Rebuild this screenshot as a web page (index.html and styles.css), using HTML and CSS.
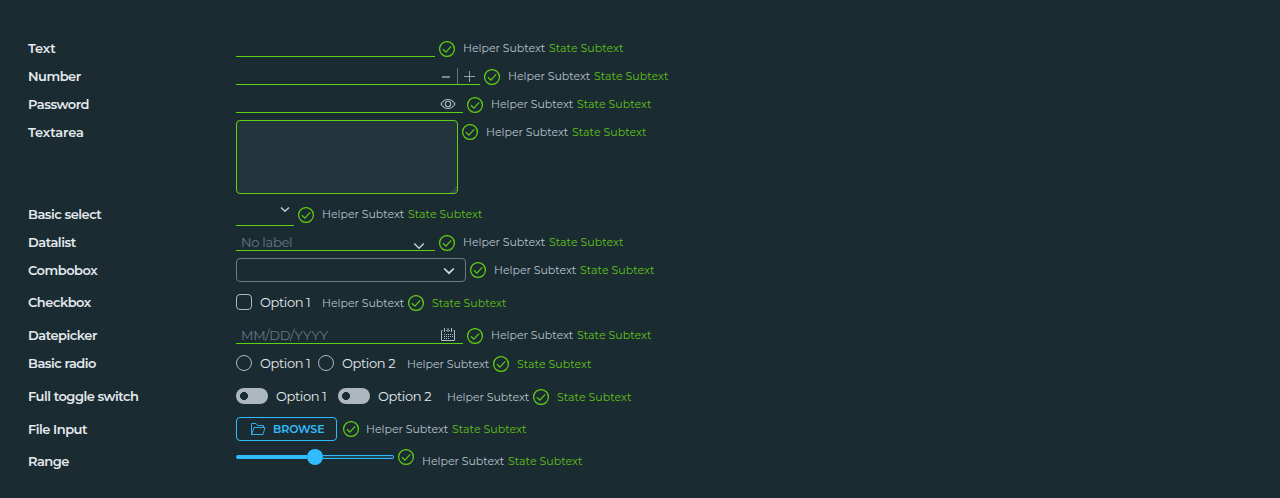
FILE: index.html
```
<!DOCTYPE html>
<html lang="en">
<head>
<meta charset="utf-8">
<title>Form controls</title>
<link rel="stylesheet" href="styles.css">
</head>
<body>
<svg class="defs" width="0" height="0">
  <symbol id="ok" viewBox="0 0 16 16"><circle cx="8" cy="8" r="7.4"/><path d="M3.9 8.3 6.9 11.1 12.2 5.4"/></symbol>
  <symbol id="chevron" viewBox="0 0 12 8"><path d="M1.2 1.5 6 6.2 10.8 1.5"/></symbol>
</svg>
<form class="form">
  <div class="row"><label class="label wide">Text</label><div class="control">
    <div class="field w199"></div><svg class="ok"><use href="#ok"/></svg><span class="helper">Helper Subtext</span><span class="state">State Subtext</span></div></div>

  <div class="row"><label class="label">Number</label><div class="control">
    <div class="field number w244"><span class="minus"></span><span class="divider"></span><span class="plus"></span></div><svg class="ok"><use href="#ok"/></svg><span class="helper">Helper Subtext</span><span class="state">State Subtext</span></div></div>

  <div class="row"><label class="label">Password</label><div class="control">
    <div class="field w227"><svg class="eye" viewBox="0 0 16 12"><path d="M1 6C2.7 3.1 5.2 1.5 8 1.5S13.300 3.100 15 6C13.300 8.900 10.800 10.500 8 10.500S2.700 8.900 1 6Z"/><circle cx="8" cy="6" r="2.700"/></svg></div><svg class="ok"><use href="#ok"/></svg><span class="helper">Helper Subtext</span><span class="state">State Subtext</span></div></div>

  <div class="row tall"><label class="label wide">Textarea</label><div class="control">
    <div class="area"><svg class="grip" viewBox="0 0 6 6"><path d="M0 6 6 0M3 6 6 3"/></svg></div><svg class="ok up"><use href="#ok"/></svg><span class="helper">Helper Subtext</span><span class="state">State Subtext</span></div></div>

  <div class="row"><label class="label">Basic select</label><div class="control">
    <div class="field select w58"><svg class="chev small"><use href="#chevron"/></svg></div><svg class="ok"><use href="#ok"/></svg><span class="helper">Helper Subtext</span><span class="state">State Subtext</span></div></div>

  <div class="row"><label class="label">Datalist</label><div class="control">
    <div class="field w199"><span class="placeholder nolabel">No label</span><svg class="chev low"><use href="#chevron"/></svg></div><svg class="ok"><use href="#ok"/></svg><span class="helper">Helper Subtext</span><span class="state">State Subtext</span></div></div>

  <div class="row h32"><label class="label">Combobox</label><div class="control">
    <div class="combo"><svg class="chev bold"><use href="#chevron"/></svg></div><svg class="ok up"><use href="#ok"/></svg><span class="helper">Helper Subtext</span><span class="state">State Subtext</span></div></div>

  <div class="row h33"><label class="label">Checkbox</label><div class="control options">
    <span class="box"></span><span class="option">Option 1</span><span class="helper">Helper Subtext</span><svg class="ok"><use href="#ok"/></svg><span class="state">State Subtext</span></div></div>

  <div class="row"><label class="label">Datepicker</label><div class="control">
    <div class="field w227"><span class="placeholder date">MM/DD/YYYY</span><svg class="calendar" viewBox="0 0 16 16"><path d="M2.500 3.500H1.500V13.500H14.500V3.500H13.500M6 3.500H7M9 3.500H10M4.500 1V5M8 1V5M11.500 1V5"/><path class="dots" d="M4 7.500H13M4 9.500H13M4 11.500H10"/></svg></div><svg class="ok"><use href="#ok"/></svg><span class="helper">Helper Subtext</span><span class="state">State Subtext</span></div></div>

  <div class="row h33"><label class="label">Basic radio</label><div class="control options">
    <span class="box round"></span><span class="option">Option 1</span><span class="box round next"></span><span class="option">Option 2</span><span class="helper">Helper Subtext</span><svg class="ok"><use href="#ok"/></svg><span class="state">State Subtext</span></div></div>

  <div class="row h33"><label class="label">Full toggle switch</label><div class="control options toggles">
    <span class="toggle"></span><span class="option">Option 1</span><span class="toggle next"></span><span class="option">Option 2</span><span class="helper">Helper Subtext</span><svg class="ok"><use href="#ok"/></svg><span class="state">State Subtext</span></div></div>

  <div class="row h32"><label class="label">File Input</label><div class="control file">
    <div class="browse"><svg class="folder" viewBox="0 0 16 14"><path d="M1.500 12.500V1.500H6L7.500 3.500H13.500V5.500M1.500 12.500 4 5.500H15L13 12.500Z"/></svg><span>BROWSE</span></div><svg class="ok up"><use href="#ok"/></svg><span class="helper">Helper Subtext</span><span class="state">State Subtext</span></div></div>

  <div class="row"><label class="label">Range</label><div class="control range">
    <div class="slider"><span class="fill"></span><span class="thumb"></span><span class="rail"></span></div><svg class="ok top"><use href="#ok"/></svg><span class="helper">Helper Subtext</span><span class="state">State Subtext</span></div></div>
</form>
</body>
</html>
```
FILE: styles.css
```
* { box-sizing: border-box; }
body {
  margin: 0;
  height: 498px;
  overflow: hidden;
  background: #1b2b32;
  font-family: Metropolis, Montserrat, Inter, sans-serif;
  color: #e3e9ec;
}
.defs { display: block; }
svg { fill: none; flex: none; }
.form { padding: 36px 28px 0; }
.row { display: grid; grid-template-columns: 208px 1fr; height: 28px; }
.tall { height: 82px; }
.h32 { height: 32px; }
.h33 { height: 33px; }
.label { font-size: 13px; font-weight: 600; line-height: 24px; white-space: nowrap; letter-spacing: -0.48px; }
.label.wide { letter-spacing: -0.1px; }
.control { display: flex; align-items: flex-start; white-space: nowrap; }

.field { display: flex; height: 21px; border-bottom: 1px solid #62d110; }
.w58 { width: 58px; }
.w199 { width: 199px; }
.w227 { width: 227px; }
.w244 { width: 244px; }

.ok { width: 16px; height: 16px; margin: 5px 8px 0 4px; stroke: #60c915; stroke-width: 1.25; }
.ok.up { margin-top: 4px; }
.ok.top { margin-top: 0; }
.helper, .state { font-size: 11px; line-height: 24px; flex: none; }
.helper { width: 86px; color: #b5c2ca; letter-spacing: -0.03px; }
.state { color: #60c117; letter-spacing: 0.04px; }

.number { justify-content: flex-end; }
.minus { width: 8px; height: 2px; margin: 12px 7px 0 0; background: #798893; }
.divider { width: 1px; height: 16px; margin-top: 4px; background: #66747d; }
.plus {
  width: 11px; height: 11px; margin: 7px 5px 0 6px;
  background:
    linear-gradient(#95a2ab, #95a2ab) center / 11px 1px no-repeat,
    linear-gradient(#95a2ab, #95a2ab) center / 1px 11px no-repeat;
}
.eye { width: 16px; height: 12px; margin: 6px 7px 0 auto; stroke: #adbbc4; stroke-width: 1.1; }

.area {
  display: flex; align-items: flex-end; justify-content: flex-end;
  width: 222px; height: 74px;
  border: 1px solid #62d110; border-radius: 4px; background: #22343c;
}
.grip { width: 6px; height: 6px; stroke: #61717a; stroke-width: 0.7; }

.select { height: 24px; }
.chev { width: 12px; height: 8px; margin: 11px 10px 0 auto; stroke: #c1cdd4; stroke-width: 1.5; }
.chev.small { width: 10px; height: 7px; margin: 4px 4px 0 auto; stroke-width: 1.7; }
.chev.low { margin-top: 12px; }
.chev.bold { margin: 8px 10px 0 auto; stroke: #d3dce1; stroke-width: 1.7; }
.placeholder { padding-left: 5px; font-size: 13px; line-height: 25px; color: #687882; letter-spacing: -0.28px; }
.combo { display: flex; width: 230px; height: 24px; border: 1px solid #6b7a84; border-radius: 4px; }
.calendar { width: 16px; height: 16px; margin: 4px 7px 0 auto; stroke: #adbbc4; stroke-width: 1; }
.dots { stroke-dasharray: 1 1; }

.box { width: 16px; height: 16px; margin: 4px 8px 0 0; border: 1px solid #adbbc4; border-radius: 4px; }
.box.round { border-radius: 50%; }
.option { width: 50px; font-size: 13px; line-height: 24px; letter-spacing: -0.4px; }
.options .helper { width: 82px; margin-left: 12px; line-height: 26px; }
.options .state { line-height: 26px; }
.next { margin-left: 8px; }
.option + .next + .option { width: 53px; letter-spacing: -0.38px; }
.toggle { width: 32px; height: 16px; margin-top: 4px; margin-right: 8px; border-radius: 8px; background: radial-gradient(circle at 8px 8px, #1b2b32 3.7px, #adb7bf 4.3px); }
.toggle.next { margin-left: 12px; }
.toggles .helper { margin-left: 16px; }
.options .ok { margin-left: 4px; }

.browse {
  display: flex; align-items: center; width: 101px; height: 24px; padding-left: 13px; margin-right: 2px;
  border: 1px solid #31bcff; border-radius: 4px; color: #31bcff;
  font-size: 11px; font-weight: 600; letter-spacing: -0.12px;
}
.file .ok { margin-right: 7px; }
.folder { width: 16px; height: 14px; margin-right: 7px; stroke: #31bcff; stroke-width: 0.9; }

.slider { display: flex; align-items: center; width: 158px; height: 16px; }
.fill { width: 71px; height: 4px; border-radius: 2px 0 0 2px; background: #31bcff; }
.thumb { width: 16px; height: 16px; border-radius: 50%; background: #31bcff; }
.rail { flex: 1; height: 4px; border: 1px solid #31bcff; border-left: 0; border-radius: 0 2px 2px 0; background: #1f4253; }
```
